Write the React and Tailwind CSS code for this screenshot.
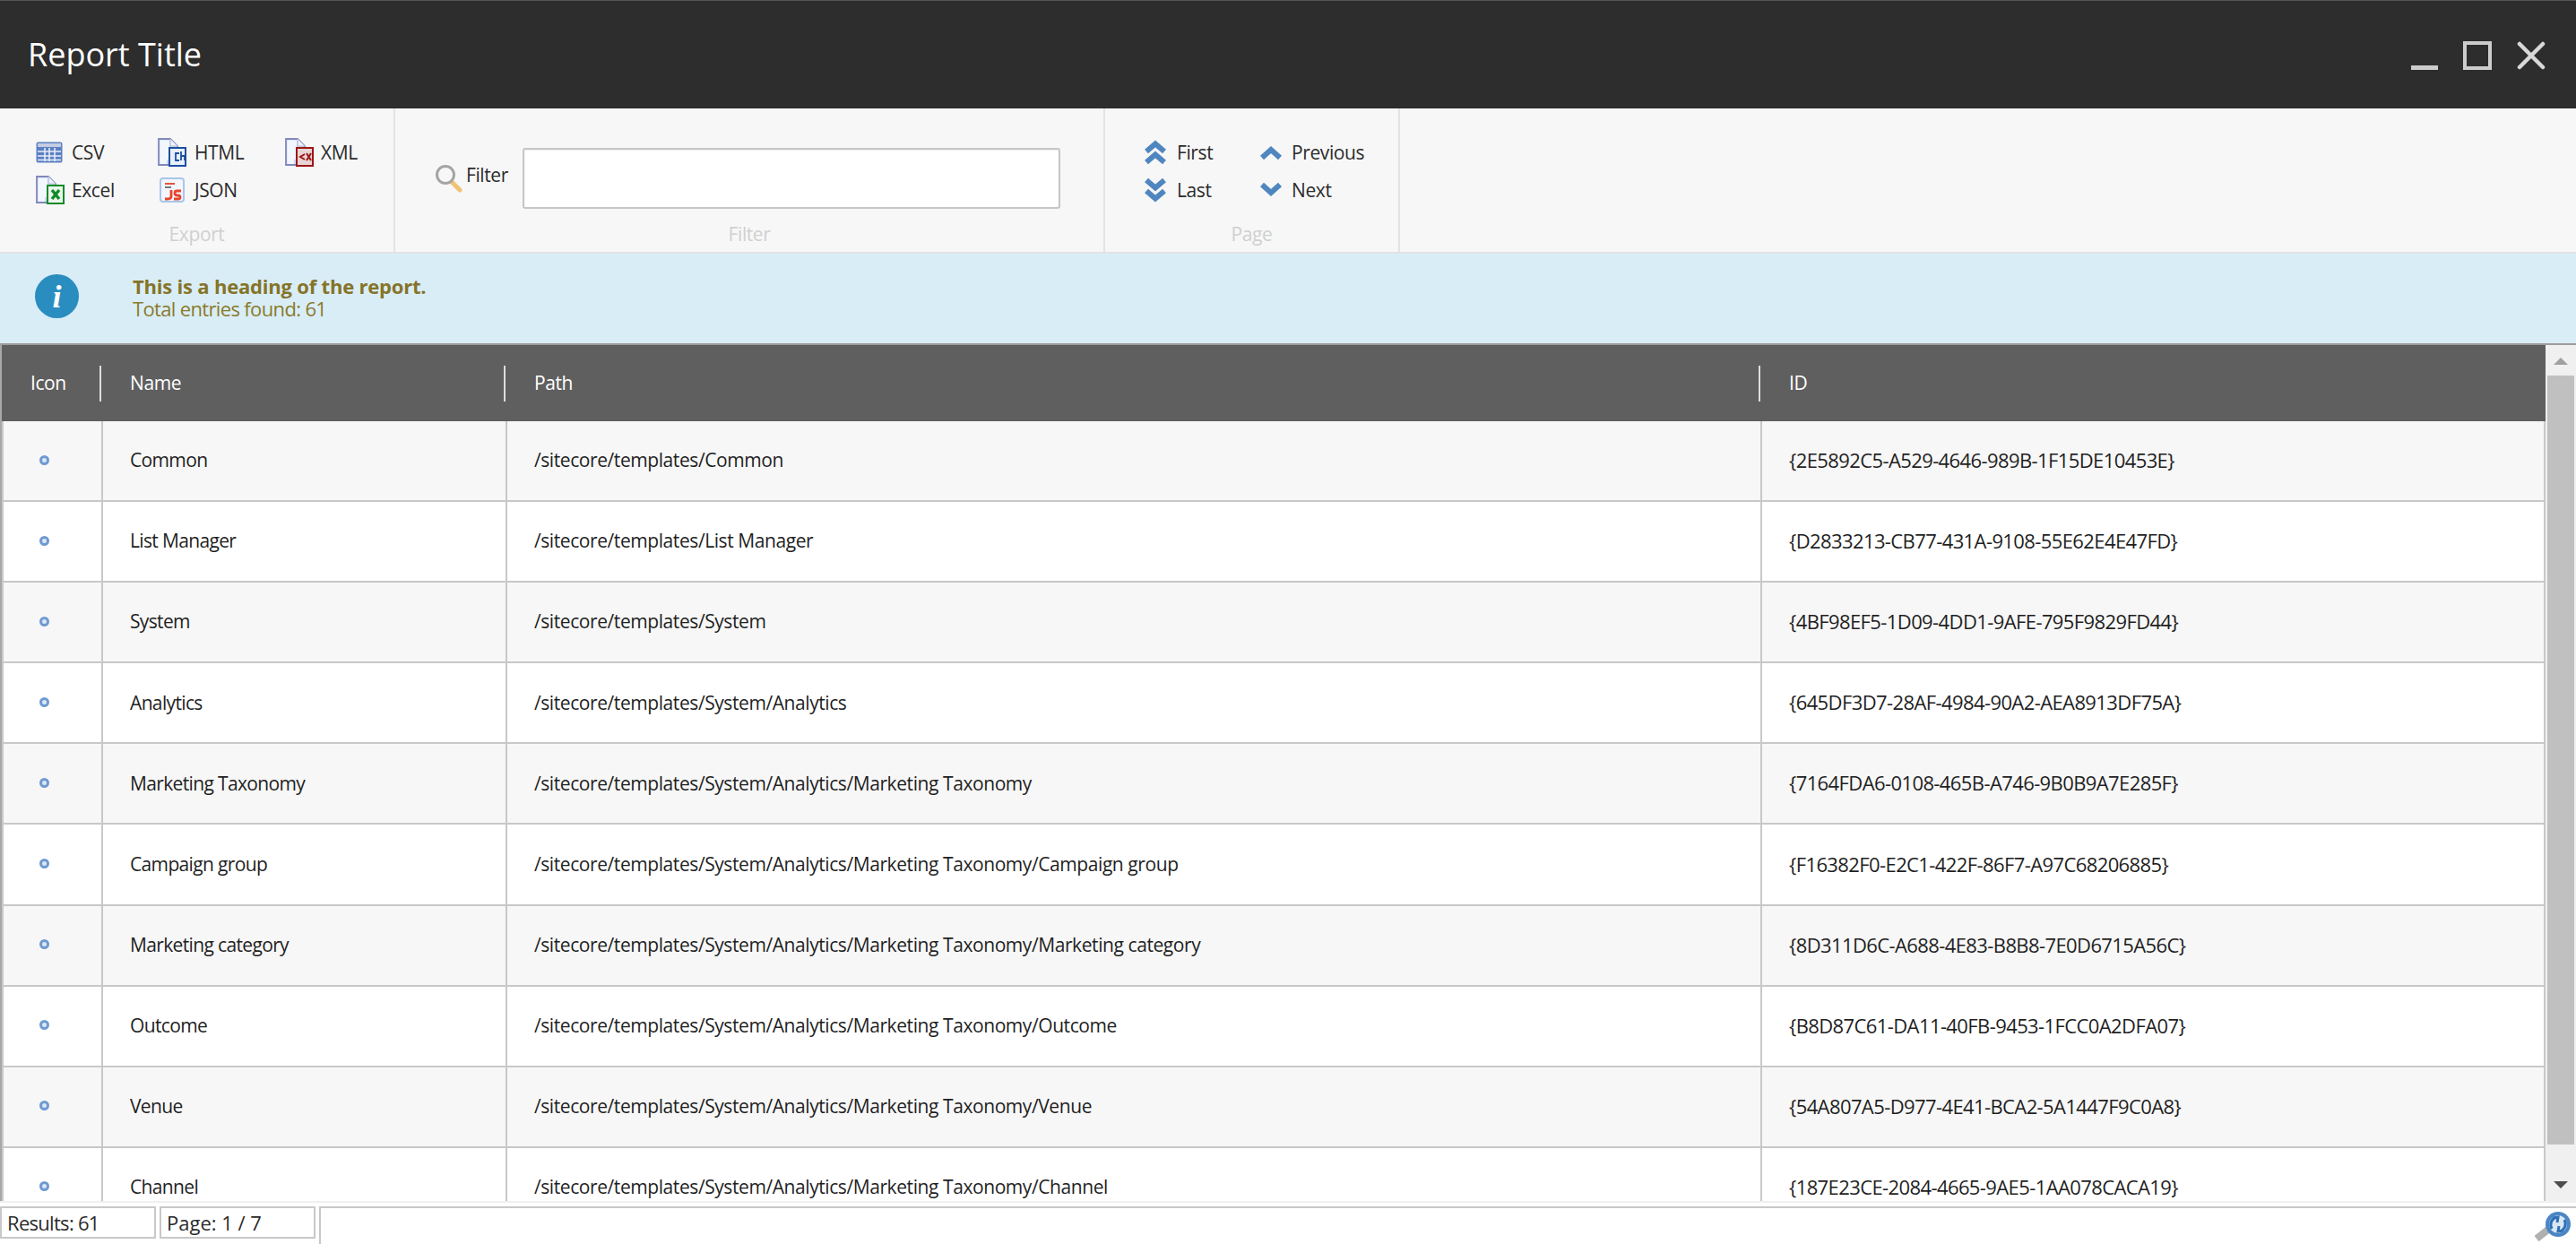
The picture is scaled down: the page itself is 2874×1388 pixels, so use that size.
import React from "react";

const rows = [
	["Common", "/sitecore/templates/Common", "{2E5892C5-A529-4646-989B-1F15DE10453E}"],
	["List Manager", "/sitecore/templates/List Manager", "{D2833213-CB77-431A-9108-55E62E4E47FD}"],
	["System", "/sitecore/templates/System", "{4BF98EF5-1D09-4DD1-9AFE-795F9829FD44}"],
	["Analytics", "/sitecore/templates/System/Analytics", "{645DF3D7-28AF-4984-90A2-AEA8913DF75A}"],
	["Marketing Taxonomy", "/sitecore/templates/System/Analytics/Marketing Taxonomy", "{7164FDA6-0108-465B-A746-9B0B9A7E285F}"],
	["Campaign group", "/sitecore/templates/System/Analytics/Marketing Taxonomy/Campaign group", "{F16382F0-E2C1-422F-86F7-A97C68206885}"],
	["Marketing category", "/sitecore/templates/System/Analytics/Marketing Taxonomy/Marketing category", "{8D311D6C-A688-4E83-B8B8-7E0D6715A56C}"],
	["Outcome", "/sitecore/templates/System/Analytics/Marketing Taxonomy/Outcome", "{B8D87C61-DA11-40FB-9453-1FCC0A2DFA07}"],
	["Venue", "/sitecore/templates/System/Analytics/Marketing Taxonomy/Venue", "{54A807A5-D977-4E41-BCA2-5A1447F9C0A8}"],
	["Channel", "/sitecore/templates/System/Analytics/Marketing Taxonomy/Channel", "{187E23CE-2084-4665-9AE5-1AA078CACA19}"],
];

// Page with a coloured corner badge, used by the HTML / Excel / XML exports
const DocIcon = ({ color, light, children }) => (
	<svg width="32" height="32" viewBox="0 0 32 32">
		<path d="M1 1H14L22 9V30H1Z" fill="#cfdcf6" stroke="#8088ba" strokeWidth="1.8" />
		<path d="M2.5 2.5H13V10H20V24H10V29H2.5Z" fill="#f1f6ff" />
		<path d="M14 1V9H22" fill="#eef2fb" stroke="#b7bdd8" strokeWidth="1.2" />
		<rect x="13" y="11" width="18" height="20" fill={light} stroke={color} strokeWidth="2" />
		{children}
	</svg>
);

const CsvIcon = () => (
	<svg width="30" height="24" viewBox="0 0 30 24">
		<rect x="0.5" y="0.5" width="29" height="23" rx="2" fill="#5c80c4" />
		<rect x="2" y="2" width="26" height="4" fill="#c4cde2" />
		<path d="M2 11H28M2 16H28M2 20.5H28M10 7V22M15 7V22M21 7V22" stroke="#e6edf9" strokeWidth="1.6" />
	</svg>
);

const JsonIcon = () => (
	<svg width="28" height="28" viewBox="0 0 28 28">
		<rect x="1" y="1" width="26" height="26" rx="3" fill="#f3f6fc" stroke="#a8c6ea" strokeWidth="2" />
		<path d="M6 7H17" stroke="#e2573f" strokeWidth="2" />
		<path d="M6 11H13" stroke="#777" strokeWidth="2" />
		<path d="M13 14V21Q13 24 9 24H6M24 15H19Q17 15 17 17.5T20 20T23 22T21 24H16" fill="none" stroke="#e8442e" strokeWidth="2.8" />
	</svg>
);

const SearchIcon = () => (
	<svg width="32" height="32" viewBox="0 0 32 32">
		<path d="M19 20L28 29" stroke="#f0c374" strokeWidth="5" strokeLinecap="round" />
		<circle cx="12" cy="12" r="9.5" fill="none" stroke="#a4a4a4" strokeWidth="3" />
	</svg>
);

const Chevron = ({ down, double }) => (
	<svg width="26" height="28" viewBox="0 0 26 28" className={down ? "rotate-180" : ""}>
		{double ? (
			<path d="M3 13L13 4.5L23 13M3 25L13 16.5L23 25" fill="none" stroke="#4f86bf" strokeWidth="6" />
		) : (
			<path d="M3 20L13 11L23 20" fill="none" stroke="#4f86bf" strokeWidth="6" />
		)}
	</svg>
);

const ToolButton = ({ icon, label, iconWidth }) => (
	<div className="flex h-[42px] items-center text-[21px] tracking-[-0.4px] text-[#2b2b2b]">
		<div className={`flex items-center ${iconWidth}`}>{icon}</div>
		<span className="pt-[2px]">{label}</span>
	</div>
);

const GroupLabel = ({ children }) => (
	<div className="mt-auto mb-[5px] h-[30px] text-center text-[21px] leading-[30px] tracking-[-0.4px] text-[#d0d0d0]">
		{children}
	</div>
);

const RowIcon = () => (
	<div className="ml-[40px] h-[11px] w-[11px] -translate-y-[1px] rounded-full border-[3px] border-[#6f9ad0] bg-[#dbe7f5]" />
);

export default function App() {
	return (
		<div className="flex h-[1388px] flex-col overflow-hidden bg-white font-['Open_Sans',sans-serif]">
			{/* Title bar */}
			<div className="flex h-[121px] items-center justify-between border-t border-[#555] bg-[#2d2d2d] pr-[34px] pl-[31px]">
				<h1 className="text-[36px] tracking-[0px] text-white">Report Title</h1>
				<div className="flex items-end gap-[28px] pt-[1px]">
					<div className="h-[5px] w-[30px] bg-[#cccccc]" />
					<div className="h-[32px] w-[32px] border-[4px] border-[#cccccc]" />
					<svg width="32" height="32" viewBox="0 0 32 32">
						<path d="M3 3L29 29M29 3L3 29" stroke="#d8d8d8" strokeWidth="4.5" strokeLinecap="round" />
					</svg>
				</div>
			</div>

			{/* Ribbon */}
			<div className="flex h-[162px] border-b-2 border-[#e3e3e3] bg-[#f7f7f7]">
				<div className="flex w-[441px] flex-col border-r-2 border-[#e3e3e3] pt-[28px]">
					<div className="grid grid-cols-[136px_142px_1fr] pl-[40px]">
						<ToolButton icon={<CsvIcon />} label="CSV" iconWidth="w-[40px]" />
						<ToolButton
							iconWidth="w-[41px]"
							label="HTML"
							icon={
								<DocIcon color="#1c4fa0" light="#e8f0fb">
									<path d="M24 17H20V25H24M26 15V25M26 20H30V25" fill="none" stroke="#1c4fa0" strokeWidth="1.8" />
								</DocIcon>
							}
						/>
						<ToolButton
							iconWidth="w-[40px]"
							label="XML"
							icon={
								<DocIcon color="#9c1616" light="#e8d4d4">
									<path d="M22 18L17 21L22 24M24 17L29 25M29 17L24 25" fill="none" stroke="#9c1616" strokeWidth="2" />
								</DocIcon>
							}
						/>
						<ToolButton
							iconWidth="w-[40px]"
							label="Excel"
							icon={
								<DocIcon color="#0f8a2a" light="#eaf6ea">
									<path d="M18 16L26 26M26 16L18 26" fill="none" stroke="#0f8a2a" strokeWidth="3.4" />
								</DocIcon>
							}
						/>
						<ToolButton icon={<div className="pl-[2px]"><JsonIcon /></div>} label="JSON" iconWidth="w-[41px]" />
					</div>
					<GroupLabel>Export</GroupLabel>
				</div>

				<div className="flex w-[792px] flex-col border-r-2 border-[#e3e3e3] pt-[44px]">
					<div className="flex items-center pl-[44px]">
						<div className="w-[35px]">
							<SearchIcon />
						</div>
						<span className="w-[63px] pb-[7px] text-[21px] tracking-[-0.4px] text-[#2b2b2b]">Filter</span>
						<input className="h-[68px] w-[600px] rounded-[3px] border-2 border-[#c6c6c6] bg-white shadow-[inset_0_1px_2px_rgba(0,0,0,0.08)]" />
					</div>
					<GroupLabel>Filter</GroupLabel>
				</div>

				<div className="flex w-[329px] flex-col border-r-2 border-[#e3e3e3] pt-[28px]">
					<div className="grid grid-cols-[129px_1fr] pl-[43px]">
						<ToolButton icon={<Chevron double />} label="First" iconWidth="w-[37px]" />
						<ToolButton icon={<Chevron />} label="Previous" iconWidth="w-[36px]" />
						<ToolButton icon={<Chevron double down />} label="Last" iconWidth="w-[37px]" />
						<ToolButton icon={<Chevron down />} label="Next" iconWidth="w-[36px]" />
					</div>
					<GroupLabel>Page</GroupLabel>
				</div>
			</div>

			{/* Report heading */}
			<div className="flex h-[102px] border-b-2 border-[#9c9c9c] bg-[#d9edf7] pt-[23px] pl-[39px]">
				<div className="flex h-[49px] w-[49px] items-center justify-center rounded-full bg-[#2a8dc0] font-['Liberation_Serif',serif] text-[36px] font-bold text-white italic">
					i
				</div>
				<div className="ml-[60px] pt-[1px] text-[22px] leading-[25px] tracking-[-0.65px] text-[#8a7a2a]">
					<div className="font-bold tracking-[-0.2px] text-[#857428]">This is a heading of the report.</div>
					<div>Total entries found: 61</div>
				</div>
			</div>

			{/* Results grid */}
			<div className="flex h-[957px] border-b-2 border-[#f0f0f0]">
				<div className="min-w-0 flex-1 overflow-hidden border-l-2 border-[#a8a8a8]">
					<div className="grid h-[85px] grid-cols-[113px_451px_1400px_1fr] bg-[#5f5f5f] text-[21px] tracking-[-0.4px] text-white">
						{["Icon", "Name", "Path", "ID"].map((title, i) => (
							<div key={title} className={`flex items-center ${i === 0 ? "pl-[32px]" : "pl-[30px]"}`}>
								<span className="pt-[1px]">{title}</span>
								{i < 3 && <div className="mr-[2px] ml-auto h-[40px] w-[2px] bg-[#dddddd]" />}
							</div>
						))}
					</div>
					{rows.map(([name, path, id], i) => (
						<div
							key={id}
							className={`grid h-[90.1px] grid-cols-[111px_451px_1400px_1fr] border-r-2 border-b-2 border-l-2 border-[#c8c8c8] text-[#1f1f1f] ${i % 2 === 0 ? "bg-[#f7f7f7]" : "bg-white"}`}
						>
							<div className="flex items-center border-r-2 border-[#c8c8c8]">
								<RowIcon />
							</div>
							<div className="flex items-center border-r-2 border-[#c8c8c8] pl-[30px] text-[21px] tracking-[-0.65px]">{name}</div>
							<div className="flex items-center border-r-2 border-[#c8c8c8] pl-[30px] text-[21px] tracking-[-0.42px]">{path}</div>
							<div className="flex items-center pb-[1px] pl-[30px] text-[22px] tracking-[-0.6px]">{id}</div>
						</div>
					))}
				</div>

				{/* Scrollbar */}
				<div className="flex w-[34px] flex-col items-center bg-[#f0f0f0] pt-[14px]">
					<div className="h-0 w-0 border-x-[8px] border-b-[8px] border-x-transparent border-b-[#a0a0a0]" />
					<div className="mt-[12px] h-[858px] w-[30px] bg-[#c0c0c0]" />
					<div className="mt-[41px] h-0 w-0 border-x-[8px] border-t-[8px] border-x-transparent border-t-[#4d4d4d]" />
				</div>
			</div>

			{/* Status bar */}
			<div className="flex flex-1 items-start gap-[4px] pt-[4px] text-[22px] text-[#2b2b2b]">
				<div className="flex h-[36px] w-[174px] items-center border-2 border-[#c8c8c8] pl-[6px] tracking-[-0.7px]">Results: 61</div>
				<div className="flex h-[36px] w-[174px] items-center border-2 border-[#c8c8c8] pl-[6px] tracking-[0px]">Page: 1 / 7</div>
				<div className="flex h-[42px] flex-1 items-center justify-end border-t-2 border-l-2 border-[#c8c8c8] pr-[4px]">
					<svg width="42" height="34" viewBox="0 0 42 34">
						<path d="M2 31L20 17" stroke="#b0b0b0" strokeWidth="8" />
						<circle cx="26" cy="15" r="14" fill="#4a86c5" />
						<circle cx="26" cy="15" r="10" fill="#d9e7f5" />
						<path d="M19 20A9 9 0 0 1 24 7M33 10A9 9 0 0 1 28 23M20 8L26 7L25 13M32 22L26 23L27 17" fill="none" stroke="#2f70b5" strokeWidth="3" />
					</svg>
				</div>
			</div>
		</div>
	);
}
